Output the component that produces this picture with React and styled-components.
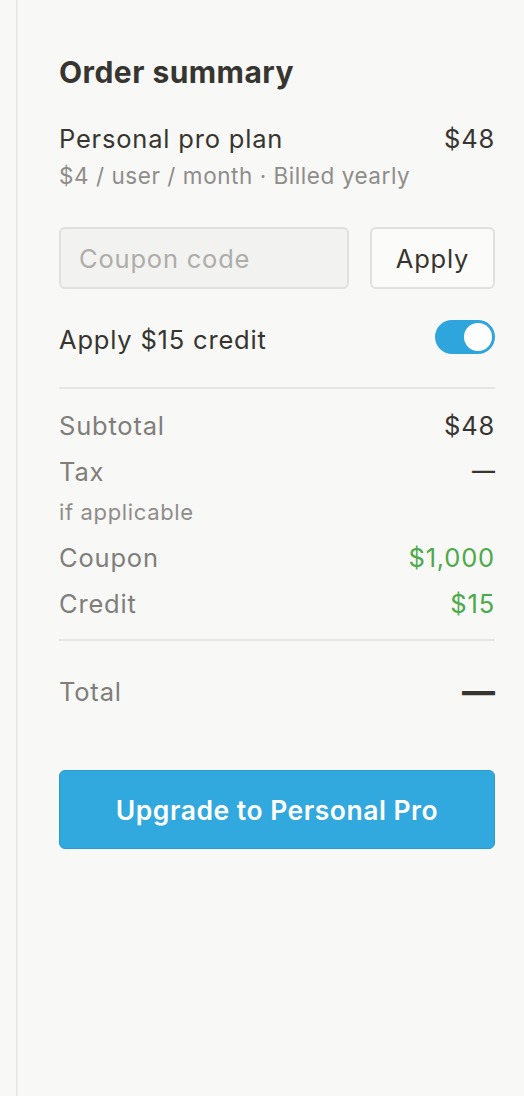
import React, { useState } from "react";
import styled, { createGlobalStyle } from "styled-components";

const GlobalStyle = createGlobalStyle`
  html, body {
    margin: 0;
    padding: 0;
    background: #f8f8f7;
  }
  body {
    font-family: Inter, "Noto Sans", "Liberation Sans", sans-serif;
    color: #37352f;
    -webkit-font-smoothing: antialiased;
  }
`;

function App() {
  const [credit, setCredit] = useState(true);

  return (
    <React.Fragment>
      <GlobalStyle />
      <Page>
        <Panel>
          <Title>Order summary</Title>
          <PlanRow>
            <BodyText>Personal pro plan</BodyText>
            <BodyText>$48</BodyText>
          </PlanRow>
          <PlanNote>$4 / user / month · Billed yearly</PlanNote>

          <CouponRow>
            <CouponInput placeholder="Coupon code" />
            <ApplyButton>Apply</ApplyButton>
          </CouponRow>

          <CreditRow>
            <BodyText>Apply $15 credit</BodyText>
            <Toggle $on={credit} onClick={() => setCredit(!credit)}>
              <Knob />
            </Toggle>
          </CreditRow>

          <Divider />

          <Lines>
            <Line>
              <Label>Subtotal</Label>
              <Value>$48</Value>
            </Line>
            <Line>
              <Label>Tax</Label>
              <Dash>—</Dash>
            </Line>
            <SubLabel>if applicable</SubLabel>
            <Line>
              <Label>Coupon</Label>
              <Value $green>$1,000</Value>
            </Line>
            <Line>
              <Label>Credit</Label>
              <Value $green>$15</Value>
            </Line>
          </Lines>

          <Divider $top={19} />

          <TotalRow>
            <Label>Total</Label>
            <Dash $big>—</Dash>
          </TotalRow>

          <UpgradeButton>Upgrade to Personal Pro</UpgradeButton>
        </Panel>
      </Page>
    </React.Fragment>
  );
}

export default App;

const Page = styled.div`
  min-height: 1096px;
  padding-left: 16px;
  background: #f8f8f7;
  box-sizing: border-box;
`;

const Panel = styled.div`
  min-height: 1096px;
  box-sizing: border-box;
  border-left: 1px solid #e6e6e4;
  box-shadow: inset 1px 0 1px rgba(0, 0, 0, 0.03);
  padding: 53px 29px 0 42px;
  display: flex;
  flex-direction: column;
`;

const Title = styled.h2`
  margin: 0;
  font-size: 30px;
  line-height: 38px;
  font-weight: 700;
  color: #37352f;
  letter-spacing: 0.45px;
`;

const PlanRow = styled.div`
  margin-top: 31px;
  display: flex;
  justify-content: space-between;
  align-items: center;
  height: 32px;
`;

const BodyText = styled.span`
  font-size: 25.5px;
  letter-spacing: 0.8px;
  color: #37352f;
`;

const PlanNote = styled.div`
  margin-top: 7px;
  font-size: 22.5px;
  letter-spacing: 0.55px;
  line-height: 30px;
  color: #8e8d8a;
`;

const CouponRow = styled.div`
  margin-top: 36px;
  display: flex;
  gap: 21px;
  height: 62px;
`;

const CouponInput = styled.input`
  flex: 1;
  min-width: 0;
  box-sizing: border-box;
  height: 62px;
  border: 2px solid #e1e0dd;
  border-radius: 6px;
  background: #f2f2f0;
  padding: 0 18px;
  font-family: inherit;
  font-size: 25.5px;
  letter-spacing: 0.8px;
  color: #37352f;
  outline: none;

  &::placeholder {
    color: #aeadaa;
  }
`;

const ApplyButton = styled.button`
  width: 125px;
  height: 62px;
  box-sizing: border-box;
  border: 2px solid #e1e0dd;
  border-radius: 6px;
  background: #fbfbfa;
  font-family: inherit;
  font-size: 25.5px;
  letter-spacing: 0.8px;
  color: #37352f;
  cursor: pointer;
`;

const CreditRow = styled.div`
  margin-top: 31px;
  height: 34px;
  display: flex;
  justify-content: space-between;
  align-items: center;

  & > span {
    padding-top: 5px;
  }
`;

const Toggle = styled.div`
  width: 60px;
  height: 34px;
  border-radius: 17px;
  background: ${(p) => (p.$on ? "#2ea5dd" : "#d8d7d4")};
  display: flex;
  align-items: center;
  justify-content: ${(p) => (p.$on ? "flex-end" : "flex-start")};
  padding: 0 3px;
  box-sizing: border-box;
  cursor: pointer;
`;

const Knob = styled.div`
  width: 28px;
  height: 28px;
  border-radius: 50%;
  background: #ffffff;
`;

const Divider = styled.hr`
  margin: ${(p) => p.$top || 33}px 0 0;
  border: none;
  height: 2px;
  background: #e6e6e3;
`;

const Lines = styled.div`
  margin-top: 19px;
  display: flex;
  flex-direction: column;
  gap: 12px;
`;

const Line = styled.div`
  height: 34px;
  display: flex;
  justify-content: space-between;
  align-items: center;
`;

const Label = styled.span`
  font-size: 25.5px;
  letter-spacing: 0.8px;
  color: #7f7e7b;
`;

const Value = styled.span`
  font-size: 25.5px;
  letter-spacing: 0.8px;
  color: ${(p) => (p.$green ? "#4ea94a" : "#37352f")};
`;

const Dash = styled.span`
  font-size: ${(p) => (p.$big ? "33px" : "23px")};
  font-weight: ${(p) => (p.$big ? 800 : 500)};
  line-height: 1;
  color: #37352f;
`;

const SubLabel = styled.div`
  margin: -2px 0 2px;
  font-size: 22px;
  letter-spacing: 0.65px;
  line-height: 28px;
  color: #8e8d8a;
`;

const TotalRow = styled.div`
  margin-top: 33px;
  height: 34px;
  display: flex;
  justify-content: space-between;
  align-items: center;
`;

const UpgradeButton = styled.button`
  margin-top: 62px;
  height: 79px;
  width: 100%;
  border: 1px solid #2a9bd0;
  border-radius: 6px;
  background: #31a8de;
  color: #ffffff;
  font-family: inherit;
  font-size: 26.5px;
  letter-spacing: 0.5px;
  font-weight: 600;
  cursor: pointer;
`;
